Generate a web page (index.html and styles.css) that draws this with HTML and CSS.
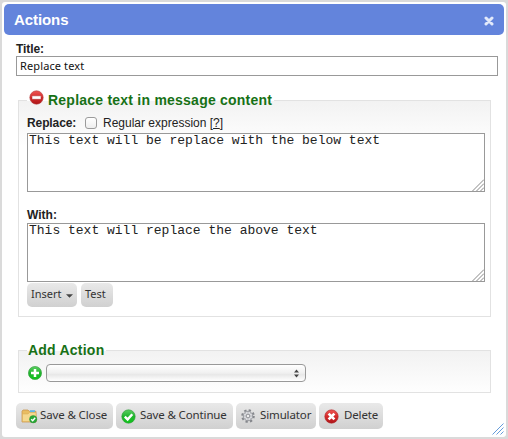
FILE: index.html
```html
<!DOCTYPE html>
<html lang="en">
<head>
<meta charset="utf-8">
<title>Actions</title>
<link rel="stylesheet" href="styles.css">
</head>
<body>
<div class="dialog">
  <header class="titlebar">
    <h1>Actions</h1>
    <svg class="close" width="10" height="10" viewBox="0 0 10 10"><path d="M2 2l6 6M8 2l-6 6" stroke="#e2e9fa" stroke-width="3" stroke-linecap="round"/></svg>
  </header>
  <main class="content">
    <label class="title-label">Title:</label>
    <div class="title-input">Replace text</div>

    <fieldset class="replace-set">
      <legend>
        <svg class="minus" width="15" height="15" viewBox="0 0 15 15"><defs><linearGradient id="red" x2="0" y2="1"><stop stop-color="#ee5754"/><stop offset=".5" stop-color="#d52b2b"/><stop offset="1" stop-color="#ad1519"/></linearGradient></defs><circle cx="7.5" cy="7.5" r="6.7" fill="url(#red)" stroke="#b5403f" stroke-width=".6"/><rect x="3" y="5.8" width="9" height="3.5" rx=".5" fill="#fff" stroke="#a92626" stroke-width=".5"/></svg>
        <span class="replace-heading">Replace text in message content</span>
      </legend>
      <div class="option-row">
        <b class="replace-label">Replace:</b>
        <span class="checkbox"></span>
        <span class="regex">Regular expression [<u>?</u>]</span>
      </div>
      <div class="textarea"><span>This text will be replace with the below text</span>
        <svg class="grip" width="12" height="12" viewBox="0 0 12 12"><path d="M.5 12L12 .5M4.5 12L12 4.5M8.5 12L12 8.5" stroke="#888"/></svg>
      </div>
      <b class="with-label"><span>With:</span></b>
      <div class="textarea"><span>This text will replace the above text</span>
        <svg class="grip" width="12" height="12" viewBox="0 0 12 12"><path d="M.5 12L12 .5M4.5 12L12 4.5M8.5 12L12 8.5" stroke="#888"/></svg>
      </div>
      <div class="insert-row">
        <div class="button insert"><span>Insert</span><svg class="caret" width="7" height="4" viewBox="0 0 7 4"><path d="M0 .3h7L3.5 3.8z" fill="#444"/></svg></div>
        <div class="button test"><span>Test</span></div>
      </div>
    </fieldset>

    <fieldset class="add-set">
      <legend><span class="add-heading">Add Action</span></legend>
      <div class="add-row">
        <svg width="14" height="14" viewBox="0 0 14 14"><defs><linearGradient id="green" x2="0" y2="1"><stop stop-color="#5bce62"/><stop offset=".5" stop-color="#20b52e"/><stop offset="1" stop-color="#10c61b"/></linearGradient></defs><circle cx="7" cy="7" r="6.6" fill="url(#green)" stroke="#319b3b" stroke-width=".6"/><path d="M7 3v8M3 7h8" stroke="#fff" stroke-width="2.5"/></svg>
        <div class="select"><svg width="5" height="9" viewBox="0 0 5 9"><path d="M0 3.5L2.5 .5 5 3.5zM0 5.5h5L2.5 8.5z" fill="#444"/></svg></div>
      </div>
    </fieldset>

    <footer class="actions">
      <div class="button save-close">
        <svg width="17" height="16" viewBox="0 0 17 16"><path d="M1 14V3.2L2 2h5l1.2 1.3H15V14z" fill="#e9bd62" stroke="#ca9850" stroke-width=".8"/><path d="M9 2.2h5v2H9z" fill="#62b5e8"/><path d="M1.5 13.5V6H7l1.5-1.5H15v9z" fill="#f5d88e" stroke="#d6a856" stroke-width=".5"/><circle cx="12.2" cy="11.2" r="3.7" fill="#29a938" stroke="#218b31" stroke-width=".4"/><path d="M10.2 11.2l1.5 1.5 2.5-3" fill="none" stroke="#fff" stroke-width="1.4"/></svg>
        <span>Save &amp; Close</span>
      </div>
      <div class="button save-continue">
        <svg width="15" height="15" viewBox="0 0 15 15"><circle cx="7.5" cy="7.5" r="6.7" fill="url(#green)" stroke="#319b3b" stroke-width=".6"/><path d="M3.8 7.6l2.8 2.8 4.7-5.2" fill="none" stroke="#fff" stroke-width="2.4"/></svg>
        <span>Save &amp; Continue</span>
      </div>
      <div class="button simulator">
        <svg width="14" height="14" viewBox="0 0 14 14" fill="none"><circle cx="7" cy="7" r="5.8" stroke="#85878c" stroke-width="2" stroke-dasharray="2.3 2.255"/><circle cx="7" cy="7" r="4.7" fill="#dcdde0" stroke="#888a90" stroke-width=".8"/><path d="M7 3v8M3 7h8M4.2 4.2l5.6 5.6M9.8 4.2L4.2 9.8" stroke="#a8aaaf" stroke-width=".6"/><circle cx="7" cy="7" r="1.8" fill="#eee" stroke="#85878c" stroke-width=".8"/></svg>
        <span>Simulator</span>
      </div>
      <div class="button delete">
        <svg width="15" height="15" viewBox="0 0 15 15"><circle cx="7.5" cy="7.5" r="6.7" fill="url(#red)" stroke="#ae292b" stroke-width=".6"/><path d="M4.6 4.6l5.8 5.8M10.4 4.6l-5.8 5.8" stroke="#fff" stroke-width="2.7"/></svg>
        <span>Delete</span>
      </div>
    </footer>
  </main>
  <svg class="window-grip" width="12" height="12" viewBox="0 0 12 12"><path d="M.5 11.5l11-11M4.5 11.5l7-7M8.5 11.5l3-3" stroke="#659cda"/></svg>
</div>
</body>
</html>
```
FILE: styles.css
```css
* { box-sizing: border-box; }
body { margin: 0; background: #dadada; font: 12px "Liberation Sans", Arial, sans-serif; color: #222; }
svg { display: block; flex: none; }
.dialog { position: relative; height: 439px; border: 2px solid #dadada; border-radius: 5px; background: #fff; padding: 2px; overflow: hidden; }
.titlebar { height: 31px; padding: 0 10px; border-radius: 5px; background: #6384dc; display: flex; align-items: center; justify-content: space-between; }
.titlebar h1 { margin: 0; color: #fff; font-size: 15px; line-height: 31px; letter-spacing: -.08px; }
.close { margin-top: 2px; }
.content { padding: 6px 6px 0 12px; }
.title-label { display: block; height: 15px; line-height: 16px; font-weight: bold; font-size: 12px; letter-spacing: -.1px; }
.title-input { width: 482px; height: 20px; border: 1px solid #999; padding-left: 3px; font: 11px/18px "Noto Sans", sans-serif; letter-spacing: .12px; color: #111; }
fieldset { display: block; min-width: 0; width: 473px; margin: 0 0 0 2px; border: 1px solid #e2e2e2; padding: 0 5px 0 8px; background: linear-gradient(#f2f2f2, #fff 45px); }
legend { height: 20px; padding: 0 2px 0 1px; display: flex; align-items: center; color: #177116; font-weight: bold; font-size: 14px; letter-spacing: .23px; white-space: nowrap; }
.replace-set { height: 227px; margin-top: 14px; }
.replace-set legend { padding-left: 2px; gap: 4px; }
.minus { margin-top: -5px; }
.option-row { height: 23px; padding-top: 2px; display: flex; align-items: center; }
.replace-label { width: 58px; letter-spacing: -.1px; }
.checkbox { width: 12px; height: 12px; border: 1px solid #9b9b9b; border-radius: 3px; background: linear-gradient(#fff, #eee); margin-right: 6px; }
.textarea { position: relative; width: 458px; height: 59px; border: 1px solid #999; padding-left: 1px; background: #fff; font: 13px/14px "Liberation Mono", monospace; color: #222; }
.grip { position: absolute; right: 0; bottom: 0; }
.with-label { display: block; height: 31px; padding-top: 16px; line-height: 15px; }
.insert-row { display: flex; gap: 4px; padding-top: 1px; }
.button { display: flex; align-items: center; height: 26px; border-radius: 5px; background: linear-gradient(#e9e9e9, #d0d0d0); font: 11.5px/16px "Noto Sans", sans-serif; color: #333; white-space: nowrap; }
.button span { padding-bottom: 2px; }
.insert-row .button { height: 24px; font-size: 11px; padding-left: 4px; }
.insert { width: 50px; gap: 4px; }
.caret { margin-top: 2px; }
.test { width: 32px; }
.add-set { height: 53px; margin-top: 23px; }
.add-row { display: flex; align-items: center; gap: 4px; padding: 4px 0 0 1px; }
.select { width: 260px; height: 18px; border: 1px solid #999; border-radius: 4px; background: linear-gradient(#fff, #f0f0f0 50%, #e8e8e8 60%, #fff); display: flex; align-items: center; justify-content: flex-end; padding-right: 6px; }
.actions { display: flex; gap: 3px; padding-top: 10px; }
.actions .button { padding-left: 5px; letter-spacing: -.13px; }
.save-close { width: 97px; gap: 2px; }
.save-continue { width: 117px; gap: 4px; }
.simulator { width: 80px; gap: 5px; }
.delete { width: 64px; gap: 5px; }
.window-grip { position: absolute; right: 2px; bottom: 2px; }
```
